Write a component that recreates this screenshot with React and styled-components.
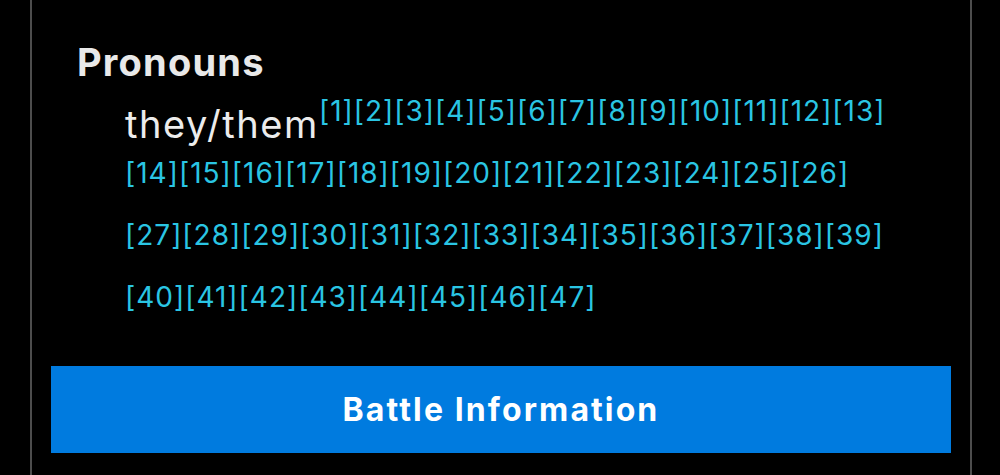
import styled, { createGlobalStyle } from "styled-components";

const GlobalStyle = createGlobalStyle`
	html, body {
		margin: 0;
		padding: 0;
		background: #000;
	}
	body {
		font-family: Inter, "Noto Sans", "Liberation Sans", sans-serif;
		color: #e8e8e8;
	}
`;

const refs = Array.from({ length: 47 }, (_, i) => i + 1);

function App() {
	return (
		<>
			<GlobalStyle />
			<StyledPage>
				<StyledPanel>
					<StyledInfoList>
						<StyledTerm>Pronouns</StyledTerm>
						<StyledValue>
							they/them
							{refs.map((n) => (
								<StyledRef key={n}>
									<a href={`#cite-${n}`}>[{n}]</a>
								</StyledRef>
							))}
						</StyledValue>
					</StyledInfoList>
					<StyledSectionButton>Battle Information</StyledSectionButton>
				</StyledPanel>
			</StyledPage>
		</>
	);
}

const StyledPage = styled.div`
	height: 475px;
	overflow: hidden;
	padding: 0 28px 0 30px;
`;
const StyledPanel = styled.div`
	height: 100%;
	box-sizing: border-box;
	border-left: 2px solid #4d4d4d;
	border-right: 2px solid #4d4d4d;
	padding: 40px 19px 0;
`;
const StyledInfoList = styled.dl`
	margin: 0 26px 25px;
`;
const StyledTerm = styled.dt`
	font-size: 38px;
	line-height: 44px;
	font-weight: 700;
	letter-spacing: 1.2px;
	color: #e9e9e9;
`;
const StyledValue = styled.dd`
	margin: 9px 30px 0 48px;
	font-size: 38px;
	line-height: 62px;
	letter-spacing: 1.6px;
	color: #ececec;
`;
const StyledRef = styled.sup`
	font-size: 28px;
	line-height: 0;
	vertical-align: 17px;
	letter-spacing: 1px;

	a {
		color: #2ac5e3;
		text-decoration: none;
	}
`;
const StyledSectionButton = styled.div`
	height: 87px;
	display: flex;
	align-items: center;
	justify-content: center;
	background: #007bdf;
	color: #fff;
	font-size: 32px;
	font-weight: 700;
	letter-spacing: 2.1px;
`;

export default App;
